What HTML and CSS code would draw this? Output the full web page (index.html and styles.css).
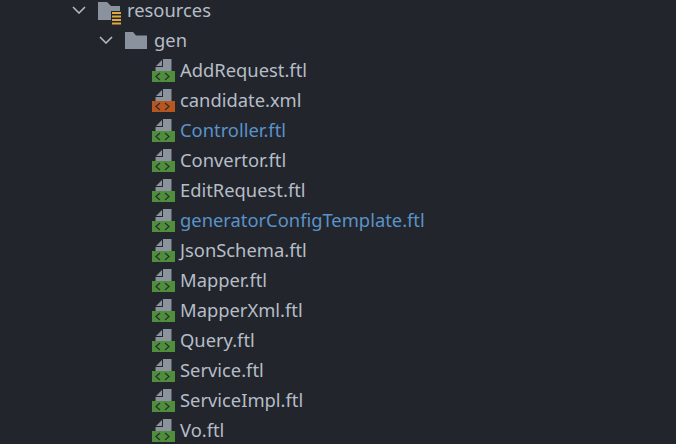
FILE: index.html
```html
<!DOCTYPE html>
<html lang="en">
<head>
<meta charset="utf-8">
<title>Project tree</title>
<link rel="stylesheet" href="styles.css">
</head>
<body>
<svg class="defs" width="0" height="0" aria-hidden="true">
  <defs>
    <symbol id="doc" viewBox="0 0 23 23">
      <path d="M4 7L10 1V7z" fill="#8b939c"/>
      <path d="M11 0H19.500V12.500H3.500V8H11z" fill="#8b939c"/>
    </symbol>
    <symbol id="code" viewBox="0 0 23 11">
      <path d="M8 2L4 5.500L8 9M13 2L17 5.500L13 9" fill="none" stroke="#2b3030" stroke-width="1.300"/>
    </symbol>
  </defs>
</svg>
<ul class="tree">
  <li class="row depth-0">
    <svg class="chevron" width="14" height="8" viewBox="0 0 14 8"><path d="M1 1l6 6 6-6" fill="none" stroke="#b4b8bf" stroke-width="1.600"/></svg>
    <svg class="folder res" width="24" height="23" viewBox="0 0 24 23">
      <path d="M0 0h9l4 4h9v14H0z" fill="#8a939d"/>
      <path d="M13 9h11v14H13z" fill="#22252c"/>
      <path d="M14 10h9v2h-9zM14 13.500h9v2h-9zM14 17h9v2h-9zM14 20.500h9v2h-9z" fill="#e0a93f"/>
    </svg>
    <span class="name">resources</span>
  </li>
  <li class="row depth-1">
    <svg class="chevron" width="14" height="8" viewBox="0 0 14 8"><path d="M1 1l6 6 6-6" fill="none" stroke="#b4b8bf" stroke-width="1.600"/></svg>
    <svg class="folder" width="22" height="17" viewBox="0 0 22 17"><path d="M0 0h8l3 3.500h11V17H0z" fill="#8a939d"/></svg>
    <span class="name">gen</span>
  </li>
  <li class="row file"><span class="ficon ftl"><svg class="d" width="23" height="23"><use href="#doc"/></svg><svg class="c" width="23" height="11"><use href="#code"/></svg></span><span class="name">AddRequest.ftl</span></li>
  <li class="row file"><span class="ficon xml"><svg class="d" width="23" height="23"><use href="#doc"/></svg><svg class="c" width="23" height="11"><use href="#code"/></svg></span><span class="name">candidate.xml</span></li>
  <li class="row file"><span class="ficon ftl"><svg class="d" width="23" height="23"><use href="#doc"/></svg><svg class="c" width="23" height="11"><use href="#code"/></svg></span><span class="name vcs">Controller.ftl</span></li>
  <li class="row file"><span class="ficon ftl"><svg class="d" width="23" height="23"><use href="#doc"/></svg><svg class="c" width="23" height="11"><use href="#code"/></svg></span><span class="name">Convertor.ftl</span></li>
  <li class="row file"><span class="ficon ftl"><svg class="d" width="23" height="23"><use href="#doc"/></svg><svg class="c" width="23" height="11"><use href="#code"/></svg></span><span class="name">EditRequest.ftl</span></li>
  <li class="row file"><span class="ficon ftl"><svg class="d" width="23" height="23"><use href="#doc"/></svg><svg class="c" width="23" height="11"><use href="#code"/></svg></span><span class="name vcs">generatorConfigTemplate.ftl</span></li>
  <li class="row file"><span class="ficon ftl"><svg class="d" width="23" height="23"><use href="#doc"/></svg><svg class="c" width="23" height="11"><use href="#code"/></svg></span><span class="name">JsonSchema.ftl</span></li>
  <li class="row file"><span class="ficon ftl"><svg class="d" width="23" height="23"><use href="#doc"/></svg><svg class="c" width="23" height="11"><use href="#code"/></svg></span><span class="name">Mapper.ftl</span></li>
  <li class="row file"><span class="ficon ftl"><svg class="d" width="23" height="23"><use href="#doc"/></svg><svg class="c" width="23" height="11"><use href="#code"/></svg></span><span class="name">MapperXml.ftl</span></li>
  <li class="row file"><span class="ficon ftl"><svg class="d" width="23" height="23"><use href="#doc"/></svg><svg class="c" width="23" height="11"><use href="#code"/></svg></span><span class="name">Query.ftl</span></li>
  <li class="row file"><span class="ficon ftl"><svg class="d" width="23" height="23"><use href="#doc"/></svg><svg class="c" width="23" height="11"><use href="#code"/></svg></span><span class="name">Service.ftl</span></li>
  <li class="row file"><span class="ficon ftl"><svg class="d" width="23" height="23"><use href="#doc"/></svg><svg class="c" width="23" height="11"><use href="#code"/></svg></span><span class="name">ServiceImpl.ftl</span></li>
  <li class="row file"><span class="ficon ftl"><svg class="d" width="23" height="23"><use href="#doc"/></svg><svg class="c" width="23" height="11"><use href="#code"/></svg></span><span class="name">Vo.ftl</span></li>
</ul>
</body>
</html>
```
FILE: styles.css
```css
html, body {
  margin: 0;
  height: 100%;
  overflow: hidden;
  background: #22252c;
}
.defs { display: block; height: 0; }
.tree {
  list-style: none;
  margin: 0;
  padding: 0;
  font-family: "Noto Sans", "Open Sans", sans-serif;
  font-size: 18.35px;
  line-height: 20px;
  color: #b6bdc7;
}
.row {
  display: flex;
  align-items: center;
  box-sizing: border-box;
  height: 30px;
  white-space: nowrap;
}
.depth-0 { padding: 0 0 5px 72px; height: 25px; }
.depth-1 { padding-left: 99px; }
.file { padding-left: 152px; }
.chevron { flex: none; }
.folder { flex: none; margin-left: 12px; margin-right: 7px; }
.depth-0 .folder { margin-right: 5px; transform: translateY(3px); }
.ficon {
  position: relative;
  flex: none;
  width: 23px;
  height: 23px;
  margin-right: 5px;
}
.ficon .d { position: absolute; left: 0; top: 0; }
.ficon .c { position: absolute; left: 0; top: 12px; }
.ftl .c { background: #4f8f3c; }
.xml .c { background: #b9551f; }
.vcs { color: #5b93c9; }
```
